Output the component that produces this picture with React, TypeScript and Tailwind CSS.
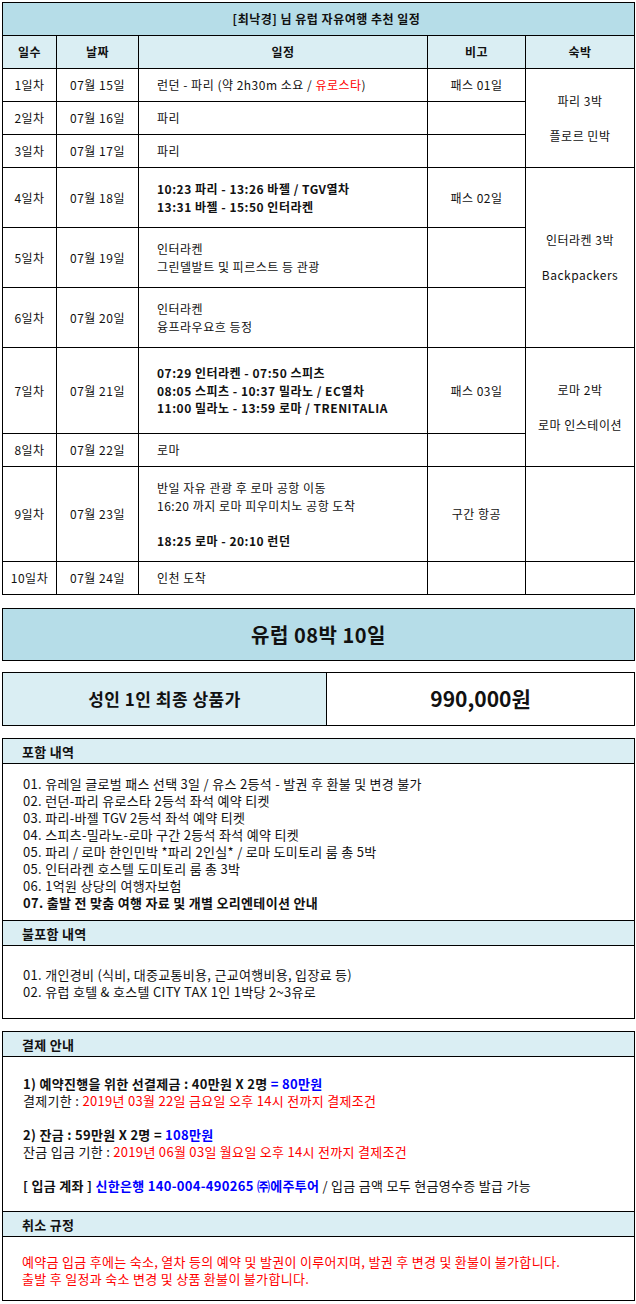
import React from 'react';

const cell = 'border border-black';
const center = `${cell} text-center`;
const plan = `${cell} pl-[18px] text-left`;

const Red = ({ children }: { children: React.ReactNode }) => (
  <span className="text-[#ff0000]">{children}</span>
);
const Blue = ({ children }: { children: React.ReactNode }) => (
  <span className="text-[#0000ff]">{children}</span>
);

const ScheduleTable = () => (
  <table className="w-[633px] table-fixed border-collapse border border-black text-[12px] leading-[17.5px] tracking-[0.5px]">
    <colgroup>
      <col className="w-[54px]" />
      <col className="w-[82px]" />
      <col className="w-[289px]" />
      <col className="w-[98px]" />
      <col className="w-[109px]" />
    </colgroup>
    <tbody>
      <tr className="h-[33px] bg-[#b6dde8]">
        <td colSpan={5} className={`${center} pl-4 font-bold`}>
          [최낙경] 님 유럽 자유여행 추천 일정
        </td>
      </tr>
      <tr className="h-[33px] bg-[#daeef3] font-bold">
        <td className={center}>일수</td>
        <td className={center}>날짜</td>
        <td className={center}>일정</td>
        <td className={center}>비고</td>
        <td className={center}>숙박</td>
      </tr>
      <tr className="h-[33px]">
        <td className={center}>1일차</td>
        <td className={center}>07월 15일</td>
        <td className={plan}>
          런던 - 파리 (약 2h30m 소요 / <Red>유로스타</Red>)
        </td>
        <td className={center}>패스 01일</td>
        <td rowSpan={3} className={center}>
          파리 3박
          <br />
          <br />
          플로르 민박
        </td>
      </tr>
      <tr className="h-[33px]">
        <td className={center}>2일차</td>
        <td className={center}>07월 16일</td>
        <td className={plan}>파리</td>
        <td className={center}></td>
      </tr>
      <tr className="h-[33px]">
        <td className={center}>3일차</td>
        <td className={center}>07월 17일</td>
        <td className={plan}>파리</td>
        <td className={center}></td>
      </tr>
      <tr className="h-[60px]">
        <td className={center}>4일차</td>
        <td className={center}>07월 18일</td>
        <td className={`${plan} font-bold`}>
          10:23 파리 - 13:26 바젤 / TGV열차
          <br />
          13:31 바젤 - 15:50 인터라켄
        </td>
        <td className={center}>패스 02일</td>
        <td rowSpan={3} className={center}>
          인터라켄 3박
          <br />
          <br />
          Backpackers
        </td>
      </tr>
      <tr className="h-[60px]">
        <td className={center}>5일차</td>
        <td className={center}>07월 19일</td>
        <td className={plan}>
          인터라켄
          <br />
          그린델발트 및 피르스트 등 관광
        </td>
        <td className={center}></td>
      </tr>
      <tr className="h-[60px]">
        <td className={center}>6일차</td>
        <td className={center}>07월 20일</td>
        <td className={plan}>
          인터라켄
          <br />
          융프라우요흐 등정
        </td>
        <td className={center}></td>
      </tr>
      <tr className="h-[86px]">
        <td className={center}>7일차</td>
        <td className={center}>07월 21일</td>
        <td className={`${plan} font-bold`}>
          07:29 인터라켄 - 07:50 스피츠
          <br />
          08:05 스피츠 - 10:37 밀라노 / EC열차
          <br />
          11:00 밀라노 - 13:59 로마 / TRENITALIA
        </td>
        <td className={center}>패스 03일</td>
        <td rowSpan={2} className={center}>
          로마 2박
          <br />
          <br />
          로마 인스테이션
        </td>
      </tr>
      <tr className="h-[33px]">
        <td className={center}>8일차</td>
        <td className={center}>07월 22일</td>
        <td className={plan}>로마</td>
        <td className={center}></td>
      </tr>
      <tr className="h-[95px]">
        <td className={center}>9일차</td>
        <td className={center}>07월 23일</td>
        <td className={plan}>
          반일 자유 관광 후 로마 공항 이동
          <br />
          16:20 까지 로마 피우미치노 공항 도착
          <br />
          <br />
          <b>18:25 로마 - 20:10 런던</b>
        </td>
        <td className={center}>구간 항공</td>
        <td className={center}></td>
      </tr>
      <tr className="h-[33px]">
        <td className={center}>10일차</td>
        <td className={center}>07월 24일</td>
        <td className={plan}>인천 도착</td>
        <td className={center}></td>
        <td className={center}></td>
      </tr>
    </tbody>
  </table>
);

const SectionHead = ({ children }: { children: React.ReactNode }) => (
  <div className="flex h-[25px] items-center border-b border-black bg-[#daeef3] pl-[19px] text-[13px] font-bold">
    {children}
  </div>
);

export default function App() {
  return (
    <div className="w-[636px] bg-white pt-[2px] pl-[2px] pb-[2px] font-['Noto_Sans_CJK_KR',sans-serif] text-[#111]">
      <ScheduleTable />

      <div className="mt-[13px] flex h-[53px] w-[633px] items-center justify-center border border-black bg-[#b6dde8] text-[20px] font-bold tracking-[0.5px]">
        유럽 08박 10일
      </div>

      <div className="mt-[11px] flex h-[54px] w-[633px] border border-black">
        <div className="flex w-[324px] items-center justify-center border-r border-black bg-[#daeef3] text-[17px] font-bold tracking-[0.5px]">
          성인 1인 최종 상품가
        </div>
        <div className="flex flex-1 items-center justify-center text-[21px] font-bold">
          990,000원
        </div>
      </div>

      <div className="mt-[12px] w-[633px] border border-black text-[13px] leading-[17px] tracking-[0.3px]">
        <SectionHead>포함 내역</SectionHead>
        <div className="pt-[11px] pb-[9px] pl-[20px]">
          <p>01. 유레일 글로벌 패스 선택 3일 / 유스 2등석 - 발권 후 환불 및 변경 불가</p>
          <p>02. 런던-파리 유로스타 2등석 좌석 예약 티켓</p>
          <p>03. 파리-바젤 TGV 2등석 좌석 예약 티켓</p>
          <p>04. 스피츠-밀라노-로마 구간 2등석 좌석 예약 티켓</p>
          <p>05. 파리 / 로마 한인민박 *파리 2인실* / 로마 도미토리 룸 총 5박</p>
          <p>05. 인터라켄 호스텔 도미토리 룸 총 3박</p>
          <p>06. 1억원 상당의 여행자보험</p>
          <p className="font-bold">07. 출발 전 맞춤 여행 자료 및 개별 오리엔테이션 안내</p>
        </div>
        <div className="border-t border-black">
          <SectionHead>불포함 내역</SectionHead>
          <div className="pt-[20px] pb-[18px] pl-[20px]">
            <p>01. 개인경비 (식비, 대중교통비용, 근교여행비용, 입장료 등)</p>
            <p>02. 유럽 호텔 &amp; 호스텔 CITY TAX 1인 1박당 2~3유로</p>
          </div>
        </div>
      </div>

      <div className="mt-[12px] w-[633px] border border-black text-[13px] leading-[17px] tracking-[0.3px]">
        <SectionHead>결제 안내</SectionHead>
        <div className="pt-[18px] pb-[17px] pl-[20px]">
          <p className="font-bold">
            1) 예약진행을 위한 선결제금 : 40만원 X 2명 <Blue>= 80만원</Blue>
          </p>
          <p>
            결제기한 : <Red>2019년 03월 22일 금요일 오후 14시 전까지 결제조건</Red>
          </p>
          <p>&nbsp;</p>
          <p className="font-bold">
            2) 잔금 : 59만원 X 2명 = <Blue>108만원</Blue>
          </p>
          <p>
            잔금 입금 기한 : <Red>2019년 06월 03일 월요일 오후 14시 전까지 결제조건</Red>
          </p>
          <p>&nbsp;</p>
          <p>
            <b>
              [ 입금 계좌 ] <Blue>신한은행 140-004-490265 ㈜에주투어</Blue>
            </b>{' '}
            / 입금 금액 모두 현금영수증 발급 가능
          </p>
        </div>
        <div className="border-t border-black">
          <SectionHead>취소 규정</SectionHead>
          <div className="pt-[16px] pb-[13px] pl-[19px] text-[#ff0000]">
            <p>예약금 입금 후에는 숙소, 열차 등의 예약 및 발권이 이루어지며, 발권 후 변경 및 환불이 불가합니다.</p>
            <p>출발 후 일정과 숙소 변경 및 상품 환불이 불가합니다.</p>
          </div>
        </div>
      </div>
    </div>
  );
}
